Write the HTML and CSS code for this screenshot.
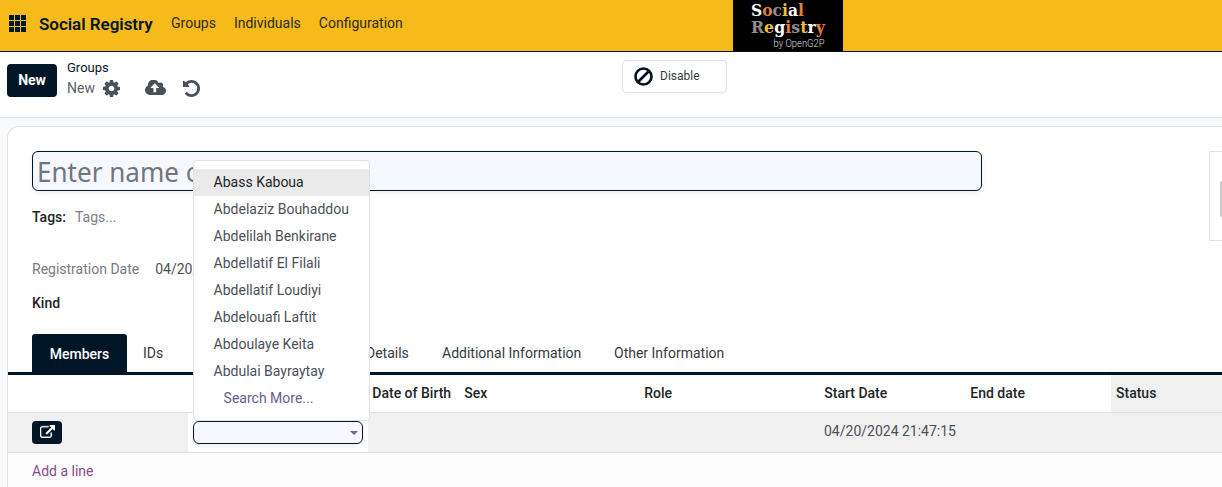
FILE: index.html
```html
<!DOCTYPE html>
<html lang="en">
<head>
<meta charset="utf-8">
<title>Social Registry</title>
<link rel="stylesheet" href="styles.css">
</head>
<body>
<header class="navbar">
  <svg class="apps" viewBox="0 0 17 17"><path d="M0 0h5v5H0zM6 0h5v5H6zM12 0h5v5h-5zM0 6h5v5H0zM6 6h5v5H6zM12 6h5v5h-5zM0 12h5v5H0zM6 12h5v5H6zM12 12h5v5h-5z"/></svg>
  <span class="brand">Social Registry</span>
  <nav class="menu"><a>Groups</a><a>Individuals</a><a>Configuration</a></nav>
  <svg class="logo" viewBox="0 0 110 51">
    <rect width="110" height="51"/>
    <g class="logo-name">
      <text x="18" y="16" textLength="53" lengthAdjust="spacingAndGlyphs"><tspan fill="#fff">S</tspan><tspan fill="#e0803c">o</tspan><tspan fill="#8f8f8f">c</tspan><tspan fill="#f2bc35">i</tspan><tspan fill="#fff">a</tspan><tspan fill="#e0803c">l</tspan></text>
      <text x="18" y="32.500" textLength="74" lengthAdjust="spacingAndGlyphs"><tspan fill="#8f8f8f">R</tspan><tspan fill="#f2bc35">e</tspan><tspan fill="#fff">g</tspan><tspan fill="#e0803c">i</tspan><tspan fill="#8f8f8f">s</tspan><tspan fill="#f2bc35">t</tspan><tspan fill="#fff">r</tspan><tspan fill="#e0803c">y</tspan></text>
    </g>
    <text class="logo-by" x="40.500" y="46.500" textLength="51" lengthAdjust="spacingAndGlyphs">by OpenG2P</text>
  </svg>
</header>
<section class="control">
  <button class="new">New</button>
  <div class="crumbs">
    <a class="crumb-parent">Groups</a>
    <div class="crumb-row">
      <span class="crumb-current">New</span>
      <svg class="cog" viewBox="128 128 1536 1536"><path d="M1152 896q0-106-75-181t-181-75-181 75-75 181 75 181 181 75 181-75 75-181zm512-109v222q0 12-8 23t-20 13l-185 28q-19 54-39 91 35 50 107 138 10 12 10 25t-9 23q-27 37-99 108t-94 71q-12 0-26-9l-138-108q-44 23-91 38-16 136-29 186-7 28-36 28h-222q-14 0-24.500-8.500t-11.500-21.500l-28-184q-49-16-90-37l-141 107q-10 9-25 9-14 0-25-11-126-114-165-168-7-10-7-23 0-12 8-23 15-21 51-66.500t54-70.500q-27-50-41-99l-183-27q-13-2-21-12.500t-8-23.500v-222q0-12 8-23t19-13l186-28q14-46 39-92-40-57-107-138-10-12-10-24 0-10 9-23 26-36 98.500-107.500t94.500-71.500q13 0 26 10l138 107q44-23 91-38 16-136 29-186 7-28 36-28h222q14 0 24.500 8.500t11.500 21.500l28 184q49 16 90 37l142-107q9-9 24-9 13 0 25 10 129 119 165 170 7 8 7 22 0 12-8 23-15 21-51 66.500t-54 70.500q26 50 41 98l183 28q13 2 21 12.500t8 23.500z"/></svg>
      <svg class="cloud" viewBox="-64 256 1920 1280"><path d="M1216 864q0-14-9-23l-352-352q-9-9-23-9t-23 9l-351 351q-10 12-10 24 0 14 9 23t23 9h224v352q0 13 9.500 22.500t22.500 9.500h192q13 0 22.500-9.500t9.500-22.500v-352h224q13 0 22.500-9.500t9.500-22.500zm640 288q0 159-112.500 271.500t-271.500 112.500h-1088q-185 0-316.500-131.500t-131.500-316.500q0-130 70-240t188-165q-2-30-2-43 0-212 150-362t362-150q156 0 285.500 87t188.500 231q71-62 166-62 106 0 181 75t75 181q0 76-41 138 130 31 213.500 135.500t83.500 238.500z"/></svg>
      <svg class="undo" viewBox="128 128 1536 1536"><path d="M1664 896q0 156-61 298t-164 245-245 164-298 61q-172 0-327-72.500t-264-204.500q-7-10-6.500-22.500t8.500-20.500l137-138q10-9 25-9 16 2 23 12 73 95 179 147t225 52q104 0 198.500-40.500t163.500-109.500 109.500-163.500 40.500-198.500-40.500-198.500-109.500-163.500-163.500-109.500-198.500-40.500q-98 0-188 35.500t-160 101.500l137 138q31 30 14 69-17 40-59 40h-448q-26 0-45-19t-19-45v-448q0-42 40-59 39-17 69 14l130 129q107-101 244.500-156.500t284.500-55.500q156 0 298 61t245 164 164 245 61 298z"/></svg>
    </div>
  </div>
  <button class="disable">
    <svg class="ban" viewBox="0 0 18 18"><circle cx="9" cy="9" r="7.600"/><path d="M3.800 14.200 14.200 3.800"/></svg>
    <span>Disable</span>
  </button>
</section>
<main class="sheet">
  <div class="title-row">
    <div class="name-input"><span class="placeholder">Enter name o</span></div>
    <div class="avatar"><div class="avatar-img"></div></div>
  </div>
  <div class="tags"><b>Tags:</b><span>Tags...</span></div>
  <div class="regdate"><label>Registration Date</label><span>04/20/</span></div>
  <div class="kind">Kind</div>
  <div class="tabs">
    <a class="tab active">Members</a><a class="tab ids">IDs</a><a class="tab details">Details</a><a class="tab additional">Additional Information</a><a class="tab">Other Information</a>
  </div>
  <div class="grid head">
    <span></span><span></span><span>Date of Birth</span><span>Sex</span><span>Role</span><span>Start Date</span><span>End date</span><span class="status">Status</span>
  </div>
  <div class="grid row">
    <div class="cell-open"><button class="open"><svg viewBox="0 0 1792 1536"><path d="M1408 928v320q0 119-84.500 203.500t-203.500 84.500h-832q-119 0-203.500-84.500t-84.500-203.500v-832q0-119 84.500-203.500t203.500-84.500h704q14 0 23 9t9 23v64q0 14-9 23t-23 9h-704q-66 0-113 47t-47 113v832q0 66 47 113t113 47h832q66 0 113-47t47-113v-320q0-14 9-23t23-9h64q14 0 23 9t9 23zm384-864v512q0 26-19 45t-45 19-45-19l-176-176-652 652q-10 10-23 10t-23-10l-114-114q-10-10-10-23t10-23l652-652-176-176q-19-19-19-45t19-45 45-19h512q26 0 45 19t19 45z"/></svg></button></div>
    <div class="cell-edit">
      <div class="select"><i class="caret"></i></div>
      <ul class="dropdown">
        <li class="hover">Abass Kaboua</li><li>Abdelaziz Bouhaddou</li><li>Abdelilah Benkirane</li><li>Abdellatif El Filali</li><li>Abdellatif Loudiyi</li><li>Abdelouafi Laftit</li><li>Abdoulaye Keita</li><li>Abdulai Bayraytay</li><li class="more">Search More...</li>
      </ul>
    </div>
    <span></span><span></span><span></span><span class="start">04/20/2024 21:47:15</span><span></span><span></span>
  </div>
  <div class="add"><a>Add a line</a></div>
</main>
</body>
</html>
```
FILE: styles.css
```css
* { box-sizing: border-box; }
body {
  margin: 0; height: 487px; overflow: hidden;
  display: flex; flex-direction: column;
  background: #f8f9fa; color: #4b5058;
  font: 14px/20px Roboto, sans-serif;
}
button { font-family: inherit; }
svg { display: block; flex: none; }

.navbar {
  height: 52px; flex: none; display: flex; align-items: flex-start;
  background: #f6bb1a; border-bottom: 1px solid #00131f; color: #00162a;
}
.apps { width: 17px; height: 17px; margin: 15px 0 0 9px; fill: #00162a; }
.brand { width: 132px; margin: 14px 0 0 13px; font-size: 17px; font-weight: 600; letter-spacing: -.04px; white-space: nowrap; }
.menu { width: 562px; margin-top: 13px; display: flex; gap: 18px; color: #2b2a20; }
.logo { width: 110px; height: 51px; }
.logo-name { font: bold 16.500px "DejaVu Serif Condensed", "DejaVu Serif", serif; }
.logo-by { font: 300 10px Roboto, sans-serif; fill: #ddd; }

.control {
  height: 66px; flex: none; display: flex; align-items: flex-start;
  background: #fff; border-bottom: 1px solid #dee2e6; padding: 0 7px;
}
.new {
  width: 50px; height: 33px; margin-top: 12px; padding: 0 0 2px;
  border: 0; border-radius: 4px; background: #001627; color: #fff;
  font-size: 14px; font-weight: 700;
}
.crumbs { width: 555px; margin-left: 10px; padding-top: 6px; }
.crumb-parent { display: block; font-size: 13px; color: #00162a; }
.crumb-row { display: flex; align-items: center; fill: #495057; }
.crumb-current { width: 36px; color: #5b6167; }
.cog { width: 17px; height: 17px; }
.cloud { width: 21px; height: 16px; margin-left: 25px; }
.undo { width: 17px; height: 17px; margin-left: 17px; }
.disable {
  width: 105px; height: 33px; margin-top: 8px; padding: 0 0 0 11px;
  display: flex; align-items: center; gap: 7px;
  border: 1px solid #dee2e6; border-radius: 4px; background: #fff;
  font-size: 12px; color: #343a40;
}
.disable span { padding-bottom: 2px; }
.ban { width: 19px; height: 19px; fill: none; stroke: #00131f; stroke-width: 2.500; }

.sheet {
  flex: 1; min-height: 0; margin: 8px 0 0 7px;
  border: 1px solid #dee2e6; border-width: 1px 0 0 1px; border-radius: 12px 0 0 0;
  background: #fff; padding-top: 24px;
}
.title-row { display: flex; justify-content: space-between; height: 55px; padding-left: 24px; }
.name-input {
  width: 950px; height: 40px; padding-left: 4px;
  border: 1px solid #00162a; border-radius: 6px; background: #f5f8ff;
  box-shadow: 0 3px 6px rgba(0, 0, 0, .06);
  font: 28px/38px "Noto Sans", sans-serif; color: #70767c;
}
.placeholder { display: inline-block; transform: scaleX(.93); transform-origin: 0 0; }
.avatar { width: 13px; height: 90px; padding: 29px 0 0 10px; border: 1px solid #dee2e6; border-right: 0; }
.avatar-img { width: 2px; height: 36px; background: #c8c8c8; border-radius: 4px 0 0 4px; }
.tags { display: flex; gap: 9px; height: 52px; padding: 1px 0 0 24px; color: #7b8086; }
.tags b, .kind { font-weight: 500; color: #212529; }
.regdate { display: flex; gap: 16px; height: 35px; padding: 1px 0 0 24px; }
.regdate label { color: #777b80; }
.kind { height: 41px; padding-left: 24px; }
.tabs {
  display: flex; height: 41px; padding-left: 24px;
  border-bottom: 3px solid #001627; color: #343a40;
}
.tab { padding-top: 9px; white-space: nowrap; }
.tab.active {
  width: 95px; height: 38px; padding-top: 10px; text-align: center;
  border-radius: 3px 3px 0 0; background: #001627; color: #fff; font-weight: 500;
}
.ids { width: 239px; padding-left: 16px; }
.details { width: 76px; }
.additional { width: 172px; }
.grid {
  display: grid; grid-template-columns: 180px 180px 92px 180px 180px 146px 145px 1fr;
  border-bottom: 1px solid #dee2e6;
}
.head { height: 38px; line-height: 37px; font-weight: 500; color: #212529; white-space: nowrap; }
.head span { padding-left: 4.300px; }
.head .status { padding-left: 5px; background: #f0f0f0; }
.row { height: 40px; background: #f0f0f0; }
.cell-open { padding: 8px 0 0 24px; }
.open { width: 30px; height: 23px; padding: 4px 0 0 8px; border: 0; border-radius: 4px; background: #001627; fill: #fff; stroke: #fff; stroke-width: 50; align-items: flex-start; display: flex; }
.open svg { width: 15px; height: 13px; }
.cell-edit { position: relative; padding: 8px 0 0 5px; background: #fff; }
.select {
  width: 170px; height: 23px; display: flex; justify-content: flex-end; padding: 9px 4px 0 0;
  border: 1px solid #00162a; border-radius: 6px; background: #f5f8ff;
  box-shadow: 0 3px 6px rgba(0, 0, 0, .06);
}
.caret { border: 4px solid transparent; border-top-color: #71639e; border-bottom: 0; height: 4px; }
.dropdown {
  position: absolute; left: 5px; bottom: 31px; width: 177px; height: 261px;
  margin: 0; padding: 8px 0; list-style: none; background: #fff;
  border: 1px solid #dee2e6; border-radius: 4px;
}
.dropdown li { height: 27px; line-height: 27px; padding-left: 19.600px; white-space: nowrap; }
.dropdown .hover { background: #eaeaea; color: #212529; }
.dropdown .more { padding-left: 29.600px; color: #675d8c; }
.start { padding: 8px 0 0 4px; white-space: nowrap; }
.add { height: 34px; padding: 8px 0 0 24px; background: #fcfcfc; color: #874b8c; }
```
